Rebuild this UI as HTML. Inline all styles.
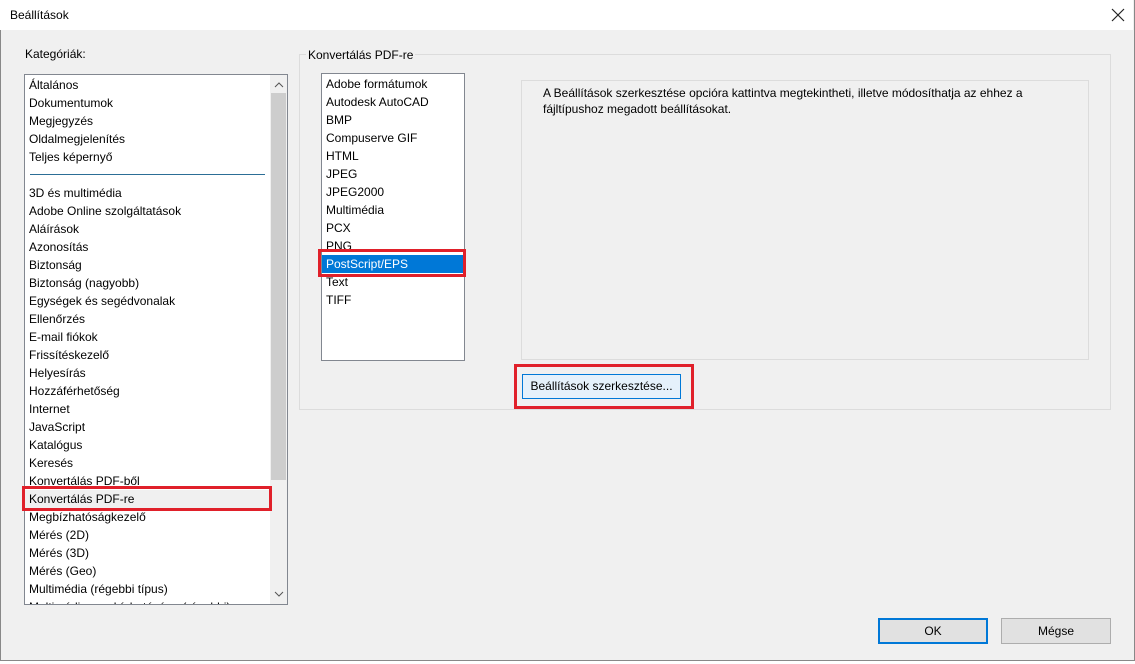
<!DOCTYPE html>
<html><head><meta charset="utf-8"><style>
*{box-sizing:border-box;margin:0;padding:0}
body{width:1135px;height:664px;background:#fff;font-family:"Liberation Sans",sans-serif;font-size:12px;color:#000;position:relative;overflow:hidden}
.a{position:absolute}
.win{left:0;top:0;width:1135px;height:661px;border:1px solid #888;border-top:none;background:#f0f0f0}
.title{left:0;top:0;width:1133px;height:30px;background:#fff}
.list div{height:18px;line-height:18px;padding-left:4px;white-space:nowrap}
.red{border:3px solid #e0202a}
</style></head><body>
<div class="a win"></div>
<div class="a title"></div>
<div class="a" style="left:10px;top:8px">Beállítások</div>
<svg class="a" style="left:1111px;top:8px" width="14" height="14"><path d="M1 1L13 13M13 1L1 13" stroke="#222" stroke-width="1.2"/></svg>

<div class="a" style="left:25px;top:47px">Kategóriák:</div>
<div class="a" style="left:24px;top:74px;width:264px;height:531px;background:#fff;border:1px solid #828790;overflow:hidden">
 <div class="list a" style="left:0;top:1px;width:245px">
  <div>Általános</div><div>Dokumentumok</div><div>Megjegyzés</div><div>Oldalmegjelenítés</div><div>Teljes képernyő</div>
  <div style="position:relative"><div style="position:absolute;left:5px;top:8px;width:235px;height:1px;background:#2c6e96;padding:0"></div></div>
  <div>3D és multimédia</div><div>Adobe Online szolgáltatások</div><div>Aláírások</div><div>Azonosítás</div><div>Biztonság</div><div>Biztonság (nagyobb)</div><div>Egységek és segédvonalak</div><div>Ellenőrzés</div><div>E-mail fiókok</div><div>Frissítéskezelő</div><div>Helyesírás</div><div>Hozzáférhetőség</div><div>Internet</div><div>JavaScript</div><div>Katalógus</div><div>Keresés</div><div>Konvertálás PDF-ből</div><div style="background:#f0f0f0">Konvertálás PDF-re</div><div>Megbízhatóságkezelő</div><div>Mérés (2D)</div><div>Mérés (3D)</div><div>Mérés (Geo)</div><div>Multimédia (régebbi típus)</div><div>Multimédia megbízhatósága (régebbi)</div>
 </div>
 <div class="a" style="left:245px;top:0;width:17px;height:529px;background:#f0f0f0"></div>
 <div class="a" style="left:246px;top:18px;width:15px;height:387px;background:#cdcdcd"></div>
 <svg class="a" style="left:249px;top:7px" width="10" height="6"><path d="M1 5L5 1L9 5" stroke="#555" fill="none"/></svg>
 <svg class="a" style="left:249px;top:516px" width="10" height="6"><path d="M1 1L5 5L9 1" stroke="#555" fill="none"/></svg>
</div>
<div class="a red" style="left:22px;top:486px;width:250px;height:25px"></div>

<div class="a" style="left:299px;top:54px;width:812px;height:356px;border:1px solid #dcdcdc"></div>
<div class="a" style="left:306px;top:48px;background:#f0f0f0;padding:0 2px">Konvertálás PDF-re</div>
<div class="a" style="left:321px;top:73px;width:144px;height:288px;background:#fff;border:1px solid #828790">
 <div class="list a" style="left:0;top:1px;width:142px">
  <div>Adobe formátumok</div><div>Autodesk AutoCAD</div><div>BMP</div><div>Compuserve GIF</div><div>HTML</div><div>JPEG</div><div>JPEG2000</div><div>Multimédia</div><div>PCX</div><div>PNG</div><div style="background:#0078d7;color:#fff">PostScript/EPS</div><div>Text</div><div>TIFF</div>
 </div>
</div>
<div class="a red" style="left:318px;top:249px;width:148px;height:28px"></div>
<div class="a" style="left:521px;top:80px;width:568px;height:280px;border:1px solid #dcdcdc"></div>
<div class="a" style="left:543px;top:85px;line-height:16px;width:520px">A Beállítások szerkesztése opcióra kattintva megtekintheti, illetve módosíthatja az ehhez a fájltípushoz megadott beállításokat.</div>
<div class="a" style="left:522px;top:374px;width:159px;height:25px;background:#e5f1fb;border:1px solid #0078d7;text-align:center;line-height:23px">Beállítások szerkesztése...</div>
<div class="a red" style="left:514px;top:364px;width:180px;height:45px"></div>

<div class="a" style="left:878px;top:618px;width:110px;height:26px;background:#e1e1e1;border:2px solid #0078d7;text-align:center;line-height:22px">OK</div>
<div class="a" style="left:1001px;top:618px;width:110px;height:26px;background:#e1e1e1;border:1px solid #adadad;text-align:center;line-height:24px">Mégse</div>
</body></html>
